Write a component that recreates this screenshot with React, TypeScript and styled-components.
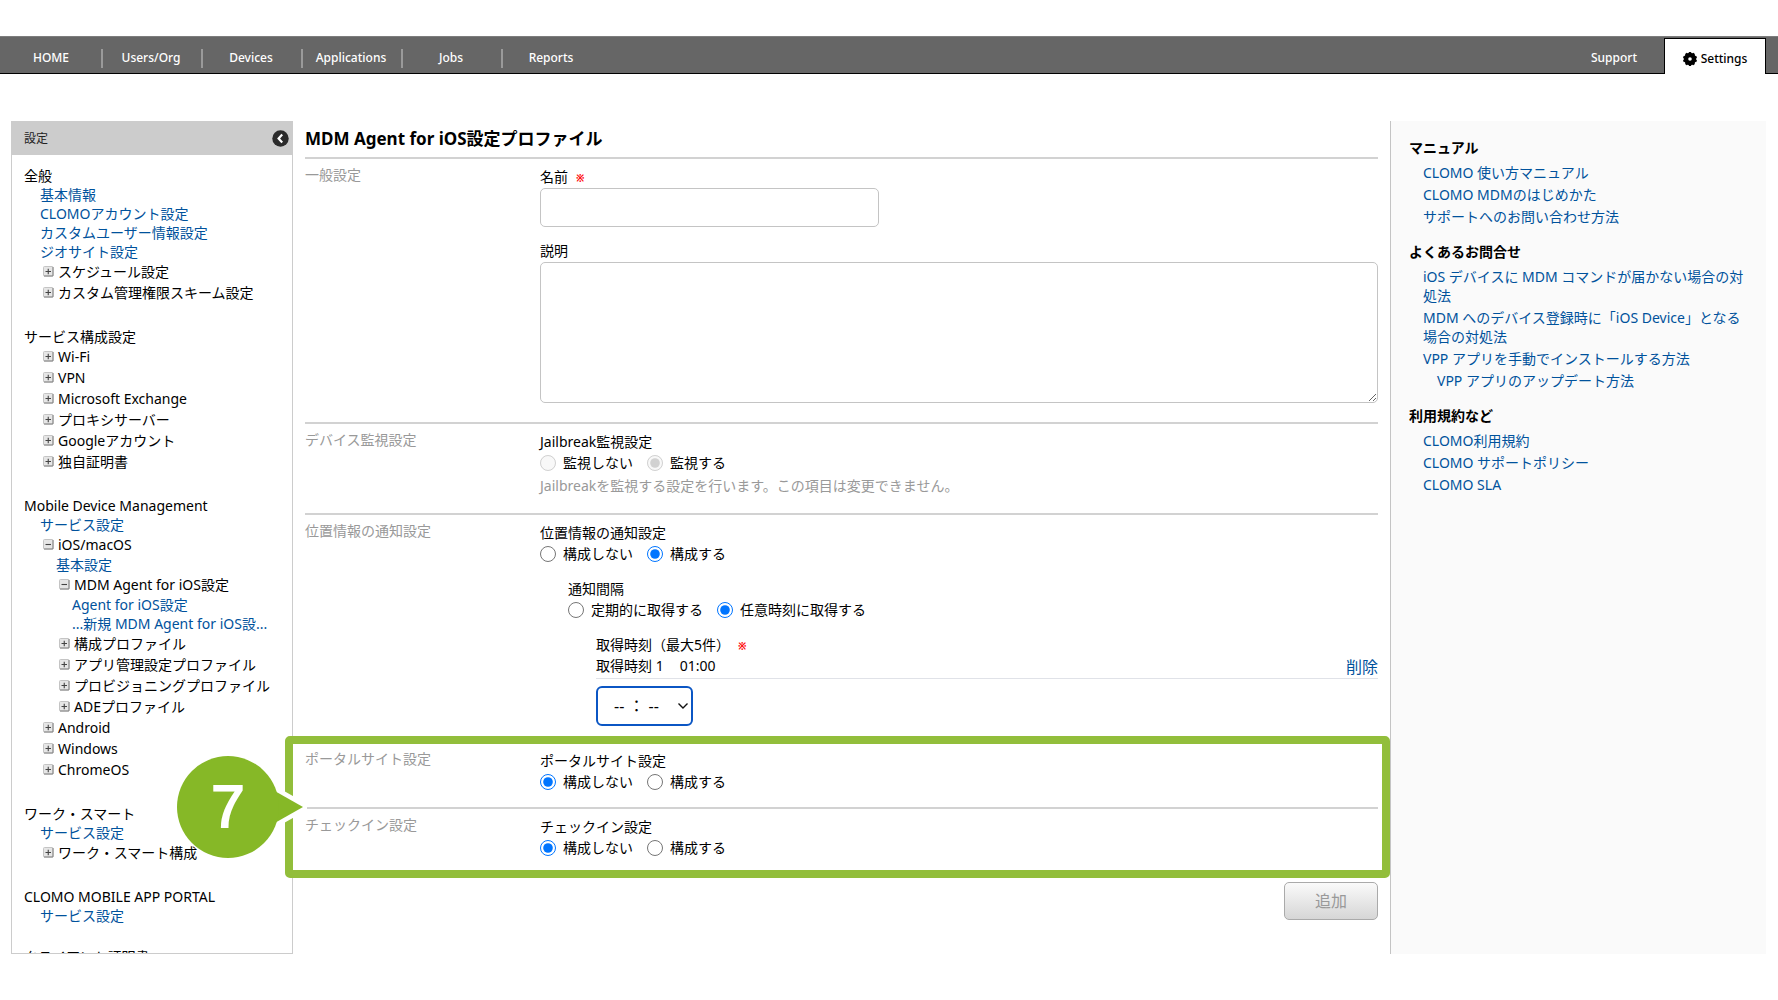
import React from 'react';
import styled, { createGlobalStyle } from 'styled-components';

const Global = createGlobalStyle`
  *, *::before, *::after { box-sizing: border-box; }
  body {
    margin: 0;
    background: #fff;
    color: #000;
    font-family: 'Noto Sans', 'Noto Sans CJK JP', sans-serif;
    font-size: 14px;
    line-height: 21px;
  }
  ul { list-style: none; margin: 0; padding: 0; }
  a { color: #00529c; text-decoration: none; }
  button, input, textarea, select { font: inherit; color: inherit; }
`;

const Page = styled.div`
  display: flex;
  flex-direction: column;
  height: 100vh;
  padding: 36px 0 46px;
`;

const TopBar = styled.header`
  display: flex;
  flex: none;
  justify-content: space-between;
  height: 38px;
  padding: 0 12px 0 1px;
  background: #666;
  border-top: 1px solid #7d7d7d;
  border-bottom: 1px solid #000;
  font-size: 12px;
`;

const NavGroup = styled.nav`
  display: flex;
  align-items: flex-start;
`;

const NavItem = styled.a<{ $divided?: boolean }>`
  width: 100px;
  height: 19px;
  margin-top: 12px;
  color: #fff;
  font-weight: 500;
  line-height: 18px;
  text-align: center;
  box-shadow: ${p => (p.$divided ? '2px 0 0 #9a9a9a' : 'none')};
`;

const SettingsTab = styled.a`
  display: flex;
  align-items: center;
  justify-content: center;
  gap: 4px;
  width: 102px;
  height: 36px;
  margin-top: 1px;
  padding-top: 4px;
  background: #fff;
  border: 1px solid #000;
  border-bottom: 0;
  color: #000;
  font-weight: 500;
`;

const Columns = styled.div`
  display: flex;
  flex: 1;
  min-height: 0;
  margin-top: 47px;
  padding: 0 12px 0 11px;
`;

const Sidebar = styled.aside`
  display: flex;
  flex: none;
  flex-direction: column;
  width: 282px;
  border: 1px solid #ccc;
`;

const SidebarHeader = styled.div`
  display: flex;
  flex: none;
  align-items: center;
  justify-content: space-between;
  height: 33px;
  padding: 0 3px 0 12px;
  background: #ccc;
  color: #222;
  font-size: 12px;
`;

const CollapseButton = styled.button`
  display: flex;
  padding: 0;
  background: none;
  border: 0;
`;

const TreeScroll = styled.div`
  flex: 1;
  min-height: 0;
  padding: 11px 0 0 12px;
  overflow-y: auto;
  scrollbar-width: none;
  white-space: nowrap;
`;

const Group = styled.section`
  margin-bottom: 22px;
`;

const GroupTitle = styled.div`
  line-height: 19px;
`;

const LinkRow = styled.li<{ $level: number }>`
  padding-left: ${p => p.$level * 16}px;
  line-height: 19px;
`;

const BranchRow = styled.li<{ $level: number }>`
  padding-left: ${p => p.$level * 16 + 3}px;
  &:last-child { padding-bottom: 2px; }
`;

const BranchButton = styled.button`
  display: flex;
  align-items: center;
  gap: 4px;
  padding: 0;
  background: none;
  border: 0;
  line-height: 21px;
`;

const Main = styled.main`
  flex: 1;
  min-width: 0;
  padding: 0 12px;
`;

const PageTitle = styled.h1`
  margin: 0;
  font-size: 17px;
  font-weight: 700;
  line-height: 36px;
`;

const Section = styled.section`
  display: grid;
  grid-template-columns: 235px 1fr;
  padding: 7px 0 15px;
  border-top: 2px solid #d2d2d2;
`;

const SectionName = styled.h2`
  margin: 0;
  color: #999;
  font-size: 14px;
  font-weight: 400;
  line-height: 18px;
`;

const Field = styled.div`
  margin-bottom: 13px;
  &:last-child { margin-bottom: 4px; }
`;

const FieldLabel = styled.label`
  display: block;
  line-height: 21px;
`;

const Required = styled.span`
  margin-left: 8px;
  color: #f00;
  font-size: 10px;
  font-weight: 700;
  line-height: 1;
`;

const TextBox = styled.input`
  display: block;
  width: 339px;
  height: 39px;
  margin-top: 1px;
  padding: 0 12px;
  border: 1px solid #c4c4c4;
  border-radius: 5px;
`;

const TextArea = styled.textarea`
  display: block;
  width: 100%;
  height: 141px;
  margin-top: 1px;
  padding: 8px 12px;
  border: 1px solid #c4c4c4;
  border-radius: 5px;
`;

const Choices = styled.fieldset`
  min-width: 0;
  margin: 0;
  padding: 0;
  border: 0;
`;

const Legend = styled.legend`
  padding: 0;
  line-height: 21px;
`;

const Options = styled.div`
  display: flex;
  gap: 14px;
`;

const Option = styled.label`
  display: flex;
  align-items: center;
  gap: 7px;
  line-height: 21px;
`;

const Radio = styled.input`
  width: 16px;
  height: 16px;
  margin: 0;
`;

const Help = styled.p`
  margin: 2px 0;
  color: #999;
`;

const Nested = styled.div`
  margin-top: 14px;
  padding-left: 28px;
`;

const TimeRow = styled.div`
  display: flex;
  gap: 16px;
  height: 24px;
  border-bottom: 1px solid #e0e2e8;
`;

const DeleteLink = styled.a`
  margin-left: auto;
  font-size: 16px;
  line-height: 24px;
`;

const SelectWrap = styled.div`
  position: relative;
  width: 97px;
  margin-top: 7px;
`;

const TimeSelect = styled.select`
  display: block;
  width: 100%;
  height: 40px;
  padding: 0 16px;
  appearance: none;
  background: #fff;
  border: 2px solid #0b56c4;
  border-radius: 6px;
  font-size: 16px;
`;

const SelectArrow = styled.svg`
  position: absolute;
  top: 16px;
  right: 4px;
  pointer-events: none;
`;

const Highlight = styled.div`
  position: relative;
  &::after {
    content: '';
    position: absolute;
    inset: -5px -12px -5px -20px;
    border: 8px solid #92be3b;
    border-radius: 5px;
    pointer-events: none;
  }
`;

const Badge = styled.div`
  position: absolute;
  z-index: 1;
  top: 50%;
  left: -132px;
  width: 134px;
  height: 110px;
  transform: translateY(-50%);
`;

const BadgeShape = styled.svg`
  display: block;
`;

const BadgeNumber = styled.span`
  position: absolute;
  top: 0;
  left: 4px;
  width: 102px;
  color: #fff;
  font-family: 'Liberation Sans', sans-serif;
  font-size: 60px;
  line-height: 110px;
  text-align: center;
  -webkit-text-stroke: 2px #fff;
`;

const Actions = styled.div`
  display: flex;
  justify-content: flex-end;
  margin-top: 9px;
`;

const AddButton = styled.button`
  width: 94px;
  height: 38px;
  padding: 0;
  background: linear-gradient(#fafafa, #d6d6d6);
  border: 1px solid #aaa;
  border-radius: 5px;
  color: #999;
  font-size: 16px;
`;

const HelpPane = styled.aside`
  flex: none;
  width: 376px;
  padding: 16px 14px 0 18px;
  background: #fafafa;
  border-left: 1px solid #c4c4c4;
`;

const HelpTitle = styled.h2`
  margin: 0 0 5px;
  font-size: 14px;
  font-weight: 700;
  line-height: 21px;
`;

const HelpList = styled.ul`
  margin-bottom: 15px;
  padding-left: 14px;
`;

const HelpItem = styled.li<{ $nested?: boolean }>`
  margin-bottom: 3px;
  padding-left: ${p => (p.$nested ? 14 : 0)}px;
  line-height: 19px;
`;

type Row = { kind: 'link' | 'closed' | 'open'; text: string; level: number };
const link = (text: string, level = 1): Row => ({ kind: 'link', text, level });
const closed = (text: string, level = 1): Row => ({ kind: 'closed', text, level });
const open = (text: string, level = 1): Row => ({ kind: 'open', text, level });

const groups: { title: string; rows: Row[] }[] = [
  {
    title: '全般',
    rows: [
      link('基本情報'),
      link('CLOMOアカウント設定'),
      link('カスタムユーザー情報設定'),
      link('ジオサイト設定'),
      closed('スケジュール設定'),
      closed('カスタム管理権限スキーム設定'),
    ],
  },
  {
    title: 'サービス構成設定',
    rows: [
      closed('Wi-Fi'),
      closed('VPN'),
      closed('Microsoft Exchange'),
      closed('プロキシサーバー'),
      closed('Googleアカウント'),
      closed('独自証明書'),
    ],
  },
  {
    title: 'Mobile Device Management',
    rows: [
      link('サービス設定'),
      open('iOS/macOS'),
      link('基本設定', 2),
      open('MDM Agent for iOS設定', 2),
      link('Agent for iOS設定', 3),
      link('...新規 MDM Agent for iOS設...', 3),
      closed('構成プロファイル', 2),
      closed('アプリ管理設定プロファイル', 2),
      closed('プロビジョニングプロファイル', 2),
      closed('ADEプロファイル', 2),
      closed('Android'),
      closed('Windows'),
      closed('ChromeOS'),
    ],
  },
  { title: 'ワーク・スマート', rows: [link('サービス設定'), closed('ワーク・スマート構成')] },
  { title: 'CLOMO MOBILE APP PORTAL', rows: [link('サービス設定')] },
  { title: 'クライアント証明書', rows: [] },
];

const helpGroups: { title: string; links: { text: string; nested?: boolean }[] }[] = [
  {
    title: 'マニュアル',
    links: [
      { text: 'CLOMO 使い方マニュアル' },
      { text: 'CLOMO MDMのはじめかた' },
      { text: 'サポートへのお問い合わせ方法' },
    ],
  },
  {
    title: 'よくあるお問合せ',
    links: [
      { text: 'iOS デバイスに MDM コマンドが届かない場合の対処法' },
      { text: 'MDM へのデバイス登録時に「iOS Device」となる場合の対処法' },
      { text: 'VPP アプリを手動でインストールする方法' },
      { text: 'VPP アプリのアップデート方法', nested: true },
    ],
  },
  {
    title: '利用規約など',
    links: [{ text: 'CLOMO利用規約' }, { text: 'CLOMO サポートポリシー' }, { text: 'CLOMO SLA' }],
  },
];

const GearIcon = () => (
  <svg width="14" height="14" viewBox="-7 -7 14 14" aria-hidden="true">
    <circle r="6.2" />
    {[0, 36, 72, 108, 144].map(a => (
      <rect key={a} x="-1.2" y="-7" width="2.4" height="14" rx="0.6" transform={`rotate(${a})`} />
    ))}
    <circle r="1.8" fill="#fff" />
  </svg>
);

const CollapseIcon = () => (
  <svg width="17" height="17" viewBox="0 0 17 17" aria-hidden="true">
    <circle cx="8.5" cy="8.5" r="8.2" fill="#2b2b2b" />
    <path d="M10.2 4.6 6.6 8.5l3.6 3.9" fill="none" stroke="#fff" strokeWidth="2.2" />
  </svg>
);

const ToggleIcon = ({ expanded }: { expanded: boolean }) => (
  <svg width="11" height="11" viewBox="0 0 11 11" aria-hidden="true">
    <rect x="0.5" y="0.5" width="9.5" height="9.5" rx="1" fill="#e6e6e6" stroke="#c4c4c4" />
    <path d="M1 10h9V1" fill="none" stroke="#808080" />
    <path d={expanded ? 'M2.5 5.5h5.5' : 'M2.5 5.5h5.5M5.25 2.8v5.4'} fill="none" stroke="#444" strokeWidth="1.1" />
  </svg>
);

type RadioGroupProps = {
  name: string;
  legend: string;
  options: string[];
  selected: number;
  disabled?: boolean;
  children?: React.ReactNode;
};

const RadioGroup = ({ name, legend, options, selected, disabled, children }: RadioGroupProps) => (
  <Choices>
    <Legend>{legend}</Legend>
    <Options>
      {options.map((text, i) => (
        <Option key={text}>
          <Radio type="radio" name={name} defaultChecked={i === selected} disabled={disabled} />
          {text}
        </Option>
      ))}
    </Options>
    {children}
  </Choices>
);

const configure = ['構成しない', '構成する'];

export default function App() {
  return (
    <>
      <Global />
      <Page>
        <TopBar>
          <NavGroup>
            {['HOME', 'Users/Org', 'Devices', 'Applications', 'Jobs', 'Reports'].map((t, i) => (
              <NavItem key={t} href="#" $divided={i < 5}>{t}</NavItem>
            ))}
          </NavGroup>
          <NavGroup>
            <NavItem href="#">Support</NavItem>
            <SettingsTab href="#"><GearIcon />Settings</SettingsTab>
          </NavGroup>
        </TopBar>

        <Columns>
          <Sidebar>
            <SidebarHeader>
              設定
              <CollapseButton type="button" aria-label="閉じる"><CollapseIcon /></CollapseButton>
            </SidebarHeader>
            <TreeScroll>
              {groups.map(g => (
                <Group key={g.title}>
                  <GroupTitle>{g.title}</GroupTitle>
                  <ul>
                    {g.rows.map(r =>
                      r.kind === 'link' ? (
                        <LinkRow key={r.text} $level={r.level}><a href="#">{r.text}</a></LinkRow>
                      ) : (
                        <BranchRow key={r.text} $level={r.level}>
                          <BranchButton type="button" aria-expanded={r.kind === 'open'}>
                            <ToggleIcon expanded={r.kind === 'open'} />
                            {r.text}
                          </BranchButton>
                        </BranchRow>
                      )
                    )}
                  </ul>
                </Group>
              ))}
            </TreeScroll>
          </Sidebar>

          <Main>
            <PageTitle>MDM Agent for iOS設定プロファイル</PageTitle>

            <Section>
              <SectionName>一般設定</SectionName>
              <div>
                <Field>
                  <FieldLabel htmlFor="profile-name">名前<Required>※</Required></FieldLabel>
                  <TextBox id="profile-name" type="text" />
                </Field>
                <Field>
                  <FieldLabel htmlFor="profile-note">説明</FieldLabel>
                  <TextArea id="profile-note" />
                </Field>
              </div>
            </Section>

            <Section>
              <SectionName>デバイス監視設定</SectionName>
              <RadioGroup name="jailbreak" legend="Jailbreak監視設定" options={['監視しない', '監視する']} selected={1} disabled>
                <Help>Jailbreakを監視する設定を行います。この項目は変更できません。</Help>
              </RadioGroup>
            </Section>

            <Section>
              <SectionName>位置情報の通知設定</SectionName>
              <RadioGroup name="location" legend="位置情報の通知設定" options={configure} selected={1}>
                <Nested>
                  <RadioGroup name="interval" legend="通知間隔" options={['定期的に取得する', '任意時刻に取得する']} selected={1}>
                    <Nested>
                      <FieldLabel htmlFor="fetch-time">取得時刻（最大5件）<Required>※</Required></FieldLabel>
                      <TimeRow>
                        <span>取得時刻 1</span>
                        <span>01:00</span>
                        <DeleteLink href="#">削除</DeleteLink>
                      </TimeRow>
                      <SelectWrap>
                        <TimeSelect id="fetch-time"><option>-- ： --</option></TimeSelect>
                        <SelectArrow width="12" height="8" viewBox="0 0 12 8" aria-hidden="true">
                          <path d="M1.5 1.5 6 6l4.5-4.5" fill="none" stroke="#111" strokeWidth="1.4" />
                        </SelectArrow>
                      </SelectWrap>
                    </Nested>
                  </RadioGroup>
                </Nested>
              </RadioGroup>
            </Section>

            <Highlight>
              <Section>
                <SectionName>ポータルサイト設定</SectionName>
                <RadioGroup name="portal" legend="ポータルサイト設定" options={configure} selected={0} />
              </Section>
              <Section>
                <SectionName>チェックイン設定</SectionName>
                <RadioGroup name="checkin" legend="チェックイン設定" options={configure} selected={0} />
              </Section>
              <Badge>
                <BadgeShape width="134" height="110" viewBox="0 0 134 110" aria-hidden="true">
                  <path d="M100 38 130 55 100 72z" fill="#fff" stroke="#fff" strokeWidth="9" />
                  <circle cx="55" cy="55" r="52.5" fill="#fff" />
                  <path d="M100 38 130 55 100 72z" fill="#86b827" />
                  <circle cx="55" cy="55" r="51" fill="#86b827" />
                </BadgeShape>
                <BadgeNumber>7</BadgeNumber>
              </Badge>
            </Highlight>

            <Actions>
              <AddButton type="button">追加</AddButton>
            </Actions>
          </Main>

          <HelpPane>
            {helpGroups.map(g => (
              <section key={g.title}>
                <HelpTitle>{g.title}</HelpTitle>
                <HelpList>
                  {g.links.map(l => (
                    <HelpItem key={l.text} $nested={l.nested}><a href="#">{l.text}</a></HelpItem>
                  ))}
                </HelpList>
              </section>
            ))}
          </HelpPane>
        </Columns>
      </Page>
    </>
  );
}
